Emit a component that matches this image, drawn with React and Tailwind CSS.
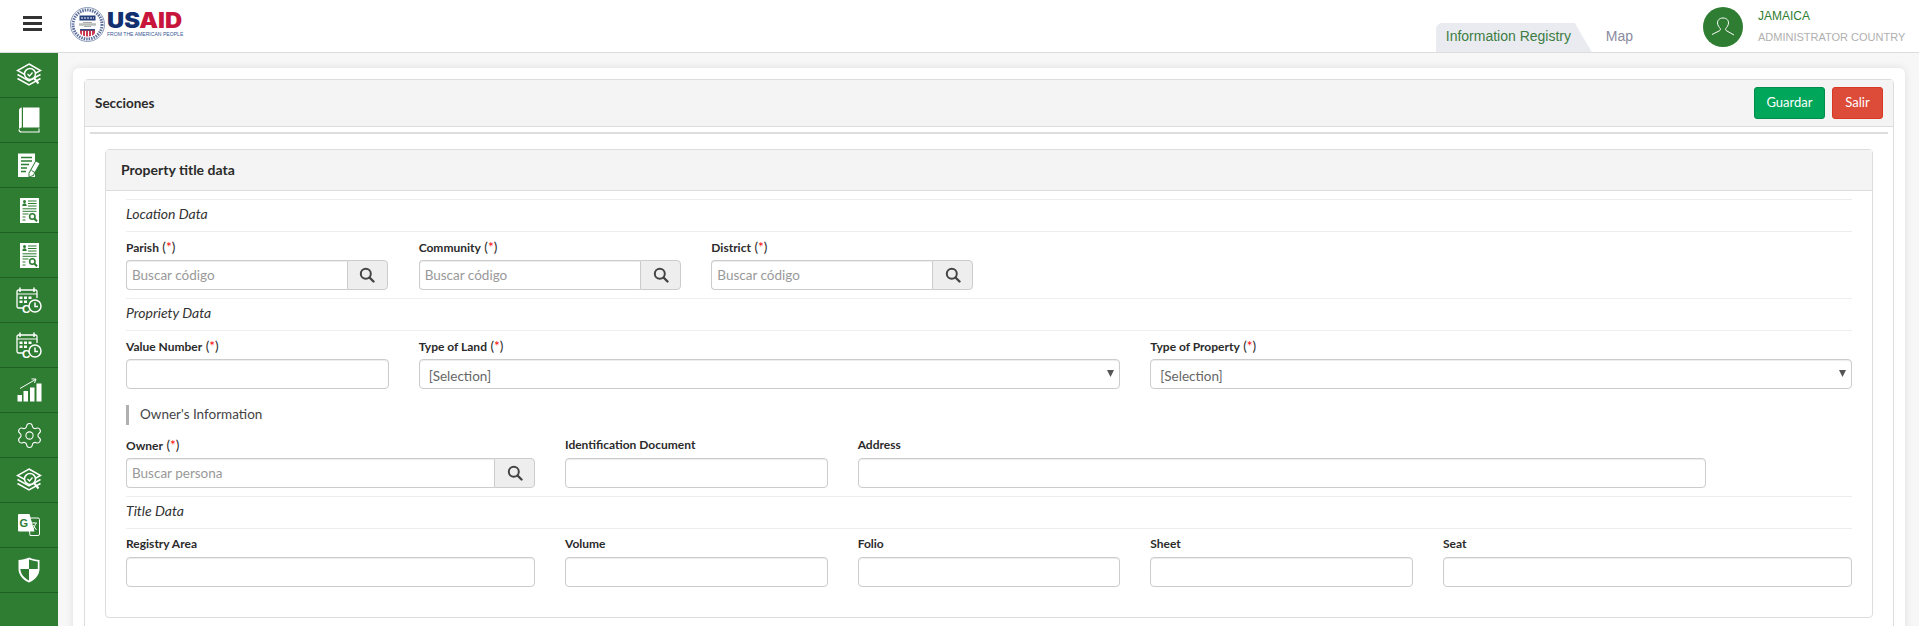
import React from "react";
import { Settings } from "lucide-react";

const W = "#ffffff";
const G = "#2e7d32";

const LayersIcon = () => (
  <svg width="26" height="24" viewBox="0 0 26 24" fill="none">
    <path d="M13 1 24.5 7.5 13 14 1.5 7.5Z" stroke={W} strokeWidth="1.5" />
    <path d="M1.5 11.5 13 18l11.5-6.5M1.5 15.5 13 22l11.5-6.5" stroke={W} strokeWidth="1.5" />
    <circle cx="14" cy="11" r="5.5" fill={G} stroke={W} strokeWidth="1.5" />
    <path d="m11.5 11 2 2 3-3.5" stroke={W} strokeWidth="1.3" />
    <path d="m18 15 4.5 5.5" stroke={W} strokeWidth="2" />
  </svg>
);
const BookIcon = () => (
  <svg width="22" height="26" viewBox="0 0 22 26" fill="none">
    <path d="M5 0.5H21.5V20.5H5Z" fill={W} />
    <path d="M3.8 0.6V20.4C2.6 20.6 1.6 21.2 1 22V3.5C1 2 2.2 0.8 3.8 0.6Z" fill={W} />
    <path d="M1 22.5C1 24 2.2 25 3.5 25H21.5" stroke={W} strokeWidth="1.2" />
    <path d="M21 21.5V25" stroke={W} strokeWidth="1" />
  </svg>
);
const DocPenIcon = () => (
  <svg width="23" height="25" viewBox="0 0 23 25" fill="none">
    <path d="M0 0.5H17V24H0Z" fill={W} />
    <path d="M3 4.5h11M3 8h11M3 11.5h8M3 15h6M3 18.5h5" stroke={G} strokeWidth="1.3" />
    <path d="M17.5 7.5 22.5 10.5 15.5 23 10.5 24.5 10.5 20Z" fill={G} />
    <path d="M18 8.5 21.5 10.6 15 22 11.5 23.5 11.5 20.3Z" fill={W} />
    <path d="M13.5 17.5 17 19.6" stroke={G} strokeWidth="1" />
  </svg>
);
const ReportIcon = () => (
  <svg width="19" height="25" viewBox="0 0 19 25" fill="none">
    <path d="M0 0H19V25H0Z" fill={W} />
    <circle cx="4.5" cy="3.6" r="1.5" fill={G} />
    <path d="M2.3 8c0-2 1-2.8 2.2-2.8S6.7 6 6.7 8Z" fill={G} />
    <path d="M8 3h8.5M8 5.5h8.5M8 8h8.5M2.5 10.8h14M2.5 13.3h14M2.5 16h6M2.5 19h3M2.5 22h3" stroke={G} strokeWidth="1" />
    <circle cx="12.3" cy="18.5" r="2.7" stroke={G} strokeWidth="1.6" />
    <path d="m14.3 20.5 2.7 2.7" stroke={G} strokeWidth="2" />
  </svg>
);
const CalendarIcon = () => (
  <svg width="26" height="26" viewBox="0 0 26 26" fill="none">
    <path d="M7 21H2.5A1.5 1.5 0 0 1 1 19.5V4.5A1.5 1.5 0 0 1 2.5 3H19.5A1.5 1.5 0 0 1 21 4.5V11" stroke={W} strokeWidth="1.3" />
    <path d="M4 0.5V5M18 0.5V5" stroke={W} strokeWidth="1.5" />
    <path d="M1 6.5H21V7.5H1Z" fill={W} />
    <path d="M3.5 9.5h3v2.5h-3zM8 9.5h3v2.5H8zM12.5 9.5h3v2.5h-3zM3.5 13.5h3V16h-3zM8 13.5h3V16H8z" fill={W} />
    <text x="6" y="25.5" fill={W} fontSize="11.5" fontWeight="700" fontFamily="'Liberation Sans',sans-serif">C</text>
    <circle cx="19" cy="19" r="6" fill={G} stroke={W} strokeWidth="1.5" />
    <path d="M19 15.5V19.5H22" stroke={W} strokeWidth="1.5" />
  </svg>
);
const ChartIcon = () => (
  <svg width="25" height="24" viewBox="0 0 25 24" fill="none">
    <path d="M0.5 17H5V23.5H0.5ZM6.5 13H11V23.5H6.5ZM13 9.5H17.5V23.5H13ZM19.5 5.5H24.5V23.5H19.5Z" fill={W} />
    <path d="M3 10.5 18.5 1.5M14.5 1 19 1l-1.5 4" stroke={W} strokeWidth="1" />
  </svg>
);
const TranslateIcon = () => (
  <svg width="22" height="22" viewBox="0 0 22 22" fill="none">
    <path d="M10 4H20A1.5 1.5 0 0 1 21.5 5.5V20A1.5 1.5 0 0 1 20 21.5H12Z" stroke={W} strokeWidth="1" />
    <path d="M1 0H11.5L16.5 17.5H1A1 1 0 0 1 0 16.5V1A1 1 0 0 1 1 0Z" fill={W} />
    <text x="1.5" y="13" fill={G} fontSize="11" fontWeight="700" fontFamily="'Liberation Sans',sans-serif">G</text>
    <path d="M14 9h5M16 8v1M15 16l3-7M15 11l3.5 5" stroke={W} strokeWidth="0.9" />
  </svg>
);
const ShieldIcon = () => (
  <svg width="22" height="26" viewBox="0 0 22 26" fill="none">
    <path d="M11 0.5C7.5 2 4 2.8 0.5 3V12C0.5 18 5 23 11 25.5C17 23 21.5 18 21.5 12V3C18 2.8 14.5 2 11 0.5Z" fill={W} />
    <path d="M11 2.5V12H19.8V4.5C17 4.2 14 3.5 11 2.5ZM11 12H2.3C2.8 17 6 21 11 23.5Z" fill={G} />
  </svg>
);

const sideIcons = [
  <LayersIcon />,
  <BookIcon />,
  <DocPenIcon />,
  <ReportIcon />,
  <ReportIcon />,
  <CalendarIcon />,
  <CalendarIcon />,
  <ChartIcon />,
  <Settings size={29} strokeWidth={0.9} color="#fff" />,
  <LayersIcon />,
  <TranslateIcon />,
  <ShieldIcon />,
];

const Seal = () => (
  <svg width="35" height="35" viewBox="0 0 35 35" fill="none">
    <circle cx="17.5" cy="17.5" r="17" fill="#fff" stroke="#8d9cba" strokeWidth="1" />
    <circle cx="17.5" cy="17.5" r="14.5" stroke="#5d6f9c" strokeWidth="3" strokeDasharray="1.5 1" />
    <circle cx="17.5" cy="17.5" r="12" fill="#fff" />
    <rect x="9.5" y="8.5" width="16" height="5" fill="#263f7c" />
    <path d="M11 11h13" stroke="#fff" strokeWidth="1" strokeDasharray="2 1" />
    <path d="M9 17.5h17" stroke="#b9bdb9" strokeWidth="2.5" />
    <path d="M13 15.5h9M14 19.5h7" stroke="#8f938f" strokeWidth="0.8" />
    <path d="M10 22H25V25.5C25 27 23 29 17.5 29.5C12 29 10 27 10 25.5Z" fill="#c9384e" />
    <path d="M10 22h15v1.6H10z" fill="#32487f" />
    <path d="M12.5 24v5M15.5 24v5.5M18.5 24v5.5M21.5 24v5" stroke="#fff" strokeWidth="1" />
  </svg>
);

const Logo = () => (
  <div className="flex items-center ml-[28px] mt-[-3px]">
    <Seal />
    <div className="ml-[2px] w-[78px]">
      <div className="text-[21px] leading-[18px] font-black font-['Inter',sans-serif] text-[#12306f] origin-left scale-x-[1.13]">
        US<span className="text-[#c8153b]">AID</span>
      </div>
      <div className="text-[5.1px] leading-[7px] mt-[1px] whitespace-nowrap font-['Liberation_Sans',sans-serif] text-[#3b5a95]">
        FROM THE AMERICAN PEOPLE
      </div>
    </div>
  </div>
);

const Header = () => (
  <header className="h-[53px] shrink-0 bg-white border-b border-[#dddddd] flex font-['Liberation_Sans',sans-serif]">
    <div className="w-[42px] pl-[23px] pt-[16px] shrink-0">
      <div className="w-[19px] flex flex-col gap-[3px]">
        <div className="h-[3px] bg-[#333333]" />
        <div className="h-[3px] bg-[#333333]" />
        <div className="h-[3px] bg-[#333333]" />
      </div>
    </div>
    <Logo />
    <div className="ml-auto self-end flex items-stretch h-[29px] text-[14px]">
      <div className="bg-[#e9ebf1] rounded-tl-[6px] pl-[10px] pb-[2px] flex items-center text-[#3d7d43] w-[139px] whitespace-nowrap">
        Information Registry
      </div>
      <div className="w-[17px] bg-[#e9ebf1] [clip-path:polygon(0_0,100%_100%,0_100%)]" />
      <div className="ml-[14px] pb-[2px] flex items-center text-[#8b8ba0]">Map</div>
    </div>
    <div className="w-[40px] h-[40px] rounded-full bg-[#2e7d32] ml-[70px] mt-[7px] shrink-0 flex items-center justify-center">
      <svg width="24" height="20" viewBox="0 0 24 20" fill="none" stroke="#fff" strokeWidth="1">
        <path d="M12 1C8 1 6.5 3.5 6.5 6C6.5 8.5 8.5 10.5 9.2 11.5C9.8 12.5 9.3 13.500 8 14L1 17.500M12 1C16 1 17.500 3.500 17.500 6C17.500 8.500 15.500 10.500 14.800 11.500C14.200 12.500 14.700 13.500 16 14L23 18" />
      </svg>
    </div>
    <div className="ml-[15px] w-[161px] shrink-0 leading-[14px]">
      <div className="text-[#2e7d32] text-[12px] mt-[9px]">JAMAICA</div>
      <div className="text-[#b0b0b0] text-[11px] mt-[7px] whitespace-nowrap">ADMINISTRATOR COUNTRY</div>
    </div>
  </header>
);

const Sidebar = () => (
  <aside className="w-[58px] shrink-0 bg-[#2e7d32] flex flex-col">
    {sideIcons.map((ic, i) => (
      <div key={i} className="h-[45px] shrink-0 border-b border-[#1f5f24] flex items-center justify-center">
        {ic}
      </div>
    ))}
  </aside>
);

const Req = () => (
  <span className="text-[13.5px] font-normal">
    {" ("}
    <span className="text-[#ff0000]">*</span>
    {")"}
  </span>
);

const Label = ({ children, req }) => (
  <label className="block h-[16px] leading-[16px] mb-[5px] text-[12px] font-bold text-[#2b2b2b] whitespace-nowrap">
    {children}
    {req && <Req />}
  </label>
);

const inputBase =
  "w-full h-[30px] border border-[#cccccc] bg-white text-[13.5px] px-[5px] text-[#666666] outline-none placeholder:text-[#999999] shadow-[inset_0_1px_1px_rgba(0,0,0,0.075)]";

const TextField = ({ label, req, span }) => (
  <div className={span}>
    <Label req={req}>{label}</Label>
    <input type="text" className={inputBase + " rounded-[4px]"} />
  </div>
);

const SearchIcon = () => (
  <svg width="16" height="16" viewBox="0 0 16 16" fill="none" stroke="#444444">
    <circle cx="6.8" cy="6.8" r="5" strokeWidth="2" />
    <path d="m10.5 10.5 4 4" strokeWidth="2.4" strokeLinecap="round" />
  </svg>
);

const SearchField = ({ label, placeholder, span }) => (
  <div className={span}>
    <Label req>{label}</Label>
    <div className="flex">
      <input type="text" placeholder={placeholder} className={inputBase + " rounded-l-[4px] border-r-0 min-w-0 flex-1"} />
      <button type="button" className="w-[41px] h-[30px] shrink-0 bg-[#eeeeee] border border-[#cccccc] rounded-r-[4px] flex items-center justify-center">
        <SearchIcon />
      </button>
    </div>
  </div>
);

const SelectField = ({ label, span }) => (
  <div className={span}>
    <Label req>{label}</Label>
    <div className="relative">
      <select className={inputBase + " rounded-[4px] appearance-none pl-[9px] pt-[4px]"} defaultValue="s">
        <option value="s">[Selection]</option>
      </select>
      <svg className="absolute right-[6px] top-[11px]" width="7" height="7" viewBox="0 0 7 7">
        <path d="M0 0H7L3.5 7Z" fill="#555555" />
      </svg>
    </div>
  </div>
);

const SectionTitle = ({ children }) => (
  <div className="h-[33px] mt-[8px] mb-[7px] border-y border-[#eeeeee] flex items-center pb-[4px] italic text-[14px] text-[#333333]">
    {children}
  </div>
);

const Row = ({ children }) => <div className="grid grid-cols-12 gap-x-[30px]">{children}</div>;

const Form = () => (
  <div className="px-[20px] pb-[30px]">
    <SectionTitle>Location Data</SectionTitle>
    <Row>
      <SearchField label="Parish" placeholder="Buscar código" span="col-span-2 pr-[1px]" />
      <SearchField label="Community" placeholder="Buscar código" span="col-span-2" />
      <SearchField label="District" placeholder="Buscar código" span="col-span-2 pr-[1px]" />
    </Row>
    <SectionTitle>Propriety Data</SectionTitle>
    <Row>
      <TextField label="Value Number" req span="col-span-2" />
      <SelectField label="Type of Land" span="col-span-5" />
      <SelectField label="Type of Property" span="col-span-5" />
    </Row>
    <div className="mt-[16px] mb-[12px] h-[20px] border-l-[3px] border-[#b0b0b0] pl-[11px] pb-[2px] flex items-center text-[13.5px] text-[#444444]">
      Owner's Information
    </div>
    <Row>
      <SearchField label="Owner" placeholder="Buscar persona" span="col-span-3" />
      <TextField label="Identification Document" span="col-span-2" />
      <TextField label="Address" span="col-span-6" />
    </Row>
    <SectionTitle>Title Data</SectionTitle>
    <Row>
      <TextField label="Registry Area" span="col-span-3" />
      <TextField label="Volume" span="col-span-2" />
      <TextField label="Folio" span="col-span-2" />
      <TextField label="Sheet" span="col-span-2" />
      <TextField label="Seat" span="col-span-3" />
    </Row>
  </div>
);

export default function App() {
  return (
    <div className="h-[626px] w-[1919px] overflow-hidden flex flex-col bg-[#f7f7f7] font-['Lato',sans-serif]">
      <Header />
      <div className="flex flex-1 min-h-0">
        <Sidebar />
        <main className="flex-1 min-w-0 pt-[15px] pl-[15px] pr-[14px] overflow-hidden">
          <div className="bg-white rounded-t-[6px] shadow-[0_0_8px_rgba(0,0,0,0.1)] p-[11px] pb-0">
            <div className="border border-[#dddddd] rounded-t-[4px] pb-[20px]">
              <div className="h-[47px] bg-[#f4f4f4] border-b border-[#dddddd] flex items-center justify-between pl-[10px] pr-[10px]">
                <h1 className="text-[13.5px] font-bold text-[#2b2b2b]">Secciones</h1>
                <div className="flex gap-[7px]">
                  <button type="button" className="w-[71px] h-[32px] rounded-[3px] bg-[#00a65a] border border-[#008d4c] text-white text-[13px]">Guardar</button>
                  <button type="button" className="w-[51px] h-[32px] rounded-[3px] bg-[#dd4b39] border border-[#d73925] text-white text-[13px]">Salir</button>
                </div>
              </div>
              <div className="mx-[5px] mt-[5px] h-[2px] bg-[#dddddd]" />
              <div className="mx-[20px] mt-[15px] border border-[#dddddd] rounded-[4px]">
                <div className="h-[41px] bg-[#f4f4f4] border-b border-[#dddddd] flex items-center pl-[15px] pb-[1px] text-[14px] font-bold text-[#2b2b2b]">
                  Property title data
                </div>
                <Form />
              </div>
            </div>
          </div>
        </main>
      </div>
    </div>
  );
}
